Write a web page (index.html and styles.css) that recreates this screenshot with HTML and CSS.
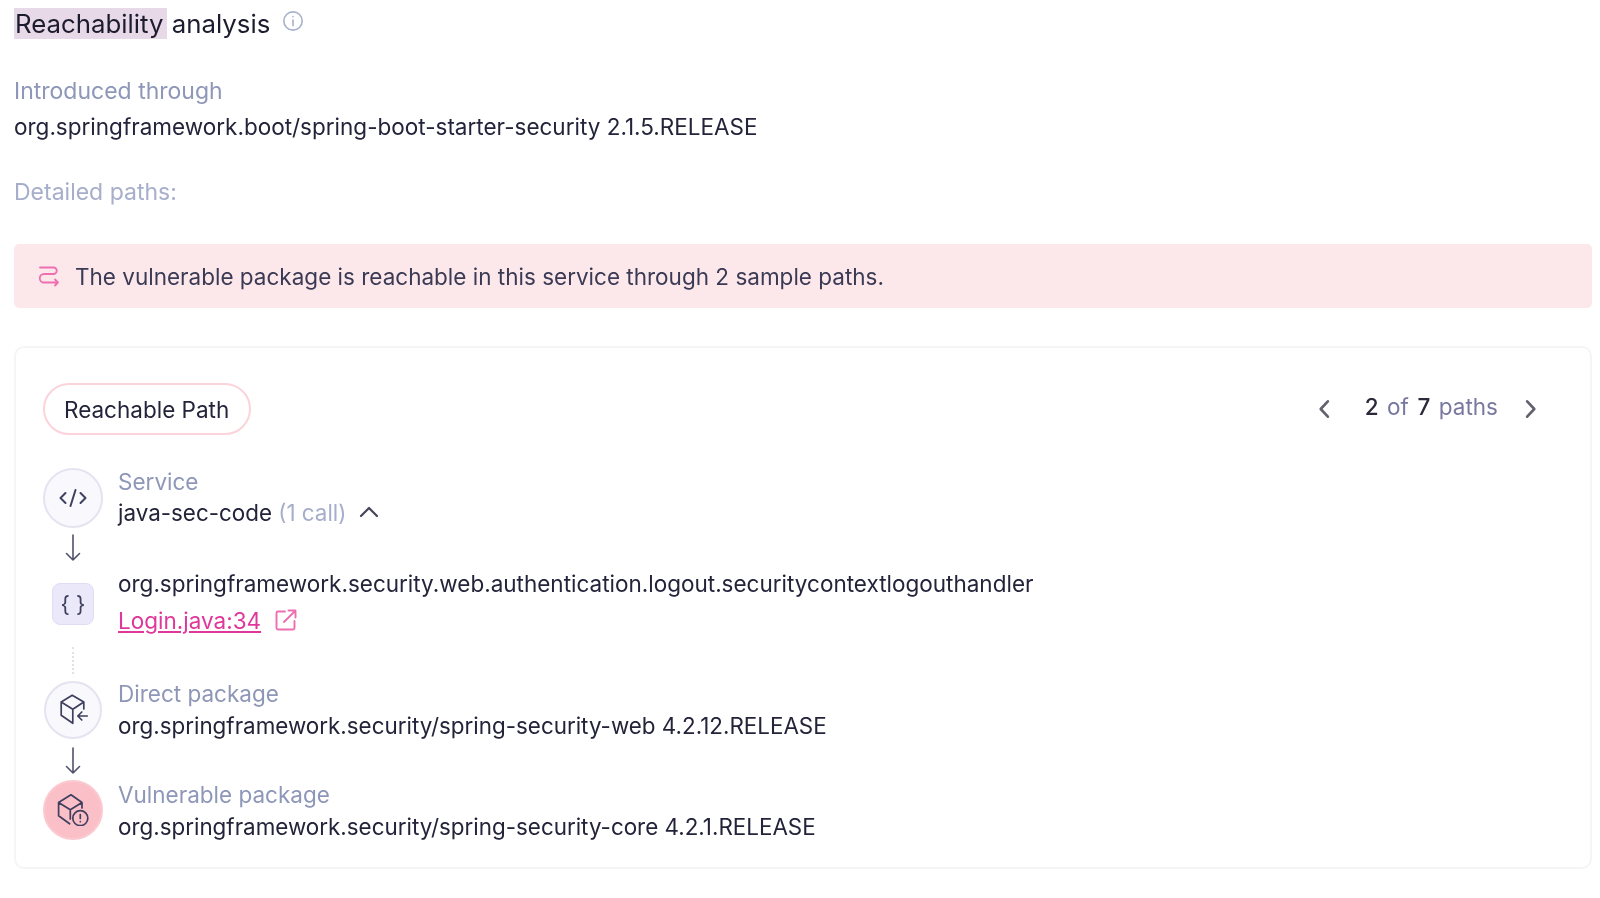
FILE: index.html
```html
<!DOCTYPE html>
<html lang="en">
<head>
<meta charset="utf-8">
<title>Reachability analysis</title>
<link rel="stylesheet" href="styles.css">
</head>
<body>
<main class="page">
  <h2 class="title"><span><mark class="hl">Reachability</mark> analysis</span>
    <svg class="info" viewBox="0 0 24 24" fill="none" stroke-width="1.800" stroke-linecap="round"><circle cx="12" cy="12" r="10"/><path d="M12 11v6M12 7.200v.1"/></svg>
  </h2>
  <div class="intro">
    <div class="label label-lg">Introduced through</div>
    <div class="value">org.springframework.boot/spring-boot-starter-security 2.1.5.RELEASE</div>
  </div>
  <div class="label label-lg detailed">Detailed paths:</div>
  <div class="banner">
    <svg class="banner-icon" viewBox="0 0 22 22" fill="none" stroke-width="1.800" stroke-linecap="round" stroke-linejoin="round"><path d="M2 2.500H15.500a3.250 3.250 0 0 1 0 6.500H6a3.500 3.500 0 0 0 0 8.500H20M17 14.500l3 3-3 3"/></svg>
    <span>The vulnerable package is reachable in this service through 2 sample paths.</span>
  </div>
  <section class="card">
    <header class="card-head">
      <span class="pill">Reachable Path</span>
      <nav class="pager">
        <svg class="chev" viewBox="0 0 12 20" fill="none" stroke-width="2.400" stroke-linecap="round" stroke-linejoin="round"><path d="M9.500 3L3 10l6.500 7"/></svg>
        <span class="count"><b>2</b> of <b>7</b> paths</span>
        <svg class="chev" viewBox="0 0 12 20" fill="none" stroke-width="2.400" stroke-linecap="round" stroke-linejoin="round"><path d="M2.500 3L9 10l-6.500 7"/></svg>
      </nav>
    </header>

    <div class="step step-service">
      <div class="node"><svg viewBox="0 0 32 32" fill="none" stroke-width="2" stroke-linecap="round" stroke-linejoin="round"><path d="M8.500 11L3.500 16l5 5M23.500 11l5 5-5 5M18.500 8l-5 16"/></svg></div>
      <div class="step-text">
        <div class="label">Service</div>
        <div class="value value-sm">java-sec-code <span class="muted">(1 call)</span>
          <svg class="caret" viewBox="0 0 20 12" fill="none" stroke-width="2.200" stroke-linecap="round" stroke-linejoin="round"><path d="M2 10l8-8 8 8"/></svg>
        </div>
      </div>
    </div>
    <svg class="arrow" viewBox="0 0 20 28" fill="none" stroke-width="1.600" stroke-linecap="round" stroke-linejoin="round"><path d="M10 1v25M3.500 19.500l6.500 6.500 6.500-6.500"/></svg>

    <div class="step step-method">
      <div class="square"><span>{ }</span></div>
      <div class="step-text">
        <div class="value">org.springframework.security.web.authentication.logout.securitycontextlogouthandler</div>
        <div class="link-row"><a class="link" href="#">Login.java:34</a>
          <svg class="ext" viewBox="0 0 24 24" fill="none" stroke-width="1.900" stroke-linecap="round" stroke-linejoin="round"><path d="M11 3.500H4a1.500 1.500 0 0 0-1.500 1.500v15A1.500 1.500 0 0 0 4 21.500h15a1.500 1.500 0 0 0 1.500-1.500v-7"/><path d="M10 14L21.500 2.500M14.500 2.500h7v7"/></svg>
        </div>
      </div>
    </div>
    <div class="dots"></div>

    <div class="step step-direct">
      <div class="node node-direct"><svg viewBox="0 0 32 32" fill="none" stroke-width="1.700" stroke-linecap="round" stroke-linejoin="round"><path d="M26.800 15V8L15.200 1.300 4.200 8v13.300l11.600 8V15.300L4.200 8M15.800 15.300l11-7.300"/><path d="M30.200 22h-9.400M24.800 18l-4 4 4 4"/></svg></div>
      <div class="step-text">
        <div class="label">Direct package</div>
        <div class="value value-sm">org.springframework.security/spring-security-web 4.2.12.RELEASE</div>
      </div>
    </div>
    <svg class="arrow arrow-two" viewBox="0 0 20 28" fill="none" stroke-width="1.600" stroke-linecap="round" stroke-linejoin="round"><path d="M10 1v25M3.500 19.500l6.500 6.500 6.500-6.500"/></svg>

    <div class="step step-vuln">
      <div class="node node-vuln"><svg viewBox="0 0 32 32" fill="none" stroke-width="1.700" stroke-linecap="round" stroke-linejoin="round"><path d="M25 14V8.500L14 .8 1.600 8.500v13.300l11 8M13.300 15.800L1.600 8.500M13.300 15.800L25 8.500M13.300 15.800V25"/><circle cx="23.300" cy="24.200" r="7.500"/><path d="M23.300 20.500v4M23.300 27.500v.1"/></svg></div>
      <div class="step-text">
        <div class="label">Vulnerable package</div>
        <div class="value value-sm">org.springframework.security/spring-security-core 4.2.1.RELEASE</div>
      </div>
    </div>
  </section>
</main>
</body>
</html>
```
FILE: styles.css
```css
* { box-sizing: border-box; }
html, body { margin: 0; background: #fff; }
body { font-family: Inter, "Liberation Sans", sans-serif; color: #23233a; height: 898px; overflow: hidden; }
.page { padding: 0 8px 0 14px; filter: blur(0.4px); }
.title { display: flex; align-items: flex-start; margin: 0; padding-top: 10px; height: 60px; font-size: 25.800px; font-weight: 400; line-height: 28px; color: #1c1c2e; }
.hl { background: #e7d9e8; color: inherit; padding: 0 4px 0 1px; margin-right: -3px; }
.info { width: 22px; height: 22px; margin: 0 0 0 12px; stroke: #a9b2cd; }
.label { font-size: 22.500px; line-height: 30px; color: #8e97b8; }
.label-lg { font-size: 23px; }
.value { font-size: 22.500px; line-height: 30px; color: #23233a; }
.value-sm { font-size: 22.400px; }
.muted { color: #a6aecb; }
.intro { margin-top: 16px; display: flex; flex-direction: column; gap: 6px; }
.detailed { margin-top: 35px; color: #a6aecb; }
.banner { display: flex; align-items: center; height: 64px; margin-top: 37px; padding-left: 24px; background: #fce8ea; border-radius: 5px; font-size: 22.500px; color: #3a3a55; }
.banner-icon { width: 22px; height: 22px; margin-right: 15px; stroke: #ee6fb0; }
.card { height: 523px; margin-top: 38px; padding: 35px 27px 0; border: 2px solid #f5f5f8; border-radius: 10px; }
.card-head { display: flex; justify-content: space-between; align-items: center; height: 52px; }
.pill { display: flex; align-items: center; height: 52px; padding: 0 20px 0 19px; border: 2px solid #fbd3da; border-radius: 26px; font-size: 22.500px; }
.pager { display: flex; align-items: center; margin-right: 25px; }
.chev { width: 14px; height: 22px; stroke: #62626e; }
.count { margin: -5px 26px 0 34px; font-size: 22.500px; word-spacing: 2.200px; color: #77789f; }
.count b { font-weight: 500; color: #2a2a3a; }
.step { display: flex; gap: 15px; }
.step-text { display: flex; flex-direction: column; }
.node { flex: none; width: 60px; height: 60px; display: flex; align-items: center; justify-content: center; border: 2px solid #e4e4f1; border-radius: 50%; background: #f8f8fd; }
.node svg { width: 32px; height: 32px; stroke: #3f3f5f; }
.node-vuln { background: #fbbfc8; border-color: #fbc9d0; }
.step-service { margin-top: 33px; }
.step-service .step-text { margin-top: -1px; }
.step-service .value { margin-top: 1px; }
.caret { width: 20px; height: 12px; margin-left: 6px; stroke: #44445a; vertical-align: 3px; }
.arrow { display: block; width: 20px; height: 28px; margin: 6px 0 0 20px; stroke: #50506c; }
.step-method { margin-top: 16px; }
.square { flex: none; width: 42px; height: 42px; margin: 5px 24px 0 9px; display: flex; align-items: center; justify-content: center; background: #ebe8fa; border: 1px solid #e0dcf5; border-radius: 8px; font-size: 22px; color: #3f3f5f; }
.step-method .step-text { margin-left: -15px; margin-top: -9px; gap: 6px; }
.link-row { display: flex; align-items: center; height: 30px; }
.link { font-size: 22.500px; color: #e0389a; text-decoration: underline; }
.ext { width: 24px; height: 24px; margin-left: 13px; stroke: #ee6fb0; }
.dots { width: 0; height: 27px; margin: 12px 0 0 29px; border-left: 2px dotted #e3e0ea; }
.step-direct { margin-top: 7px; }
.step-direct .step-text { margin-top: -2px; }
.step-direct .value { margin-top: 2px; }
.node-direct { width: 58px; height: 58px; margin: 0 1px; }
.arrow-two { margin-top: 6px; }
.step-vuln { margin-top: 5px; }
.step-vuln .step-text { margin-top: 0; }
.step-vuln .value { margin-top: 2px; }
```
